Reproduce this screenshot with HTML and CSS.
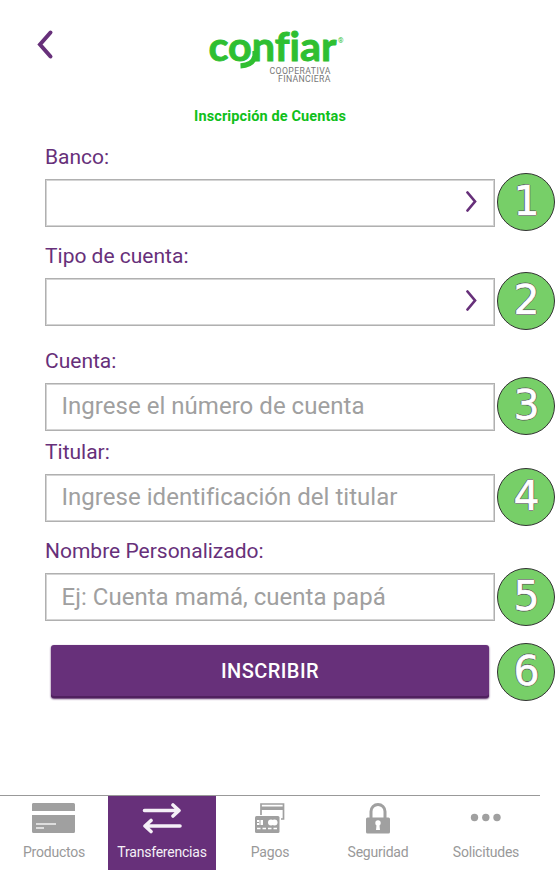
FILE: index.html
```html
<!DOCTYPE html>
<html lang="es">
<head>
<meta charset="utf-8">
<title>Inscripción de Cuentas</title>
<link rel="stylesheet" href="styles.css">
</head>
<body>
<main class="screen">
  <header class="header">
    <svg class="back" width="20" height="34" viewBox="0 0 20 34"><path d="M15.500 4.500 5 16.500 15.500 28.500" fill="none" stroke="#67307a" stroke-width="4" stroke-linecap="round"/></svg>
    <svg class="logo" width="142" height="62" viewBox="0 0 142 62">
      <text class="wordmark" x="3.500" y="36" textLength="128" lengthAdjust="spacingAndGlyphs">confiar</text>
      <path d="M50 26V31Q48 40.300 35.500 40.800" fill="none" stroke="#2fbf31" stroke-width="5.200"/>
      <text class="registered" x="133" y="18">®</text>
      <text class="tagline" x="64.500" y="49" textLength="61">COOPERATIVA</text>
      <text class="tagline" x="73" y="57" textLength="52.500">FINANCIERA</text>
    </svg>
  </header>
  <h1 class="title">Inscripción de Cuentas</h1>

  <form class="form">
    <label class="label">Banco:</label>
    <div class="row">
      <div class="field select"><svg width="12" height="22" viewBox="0 0 12 22"><path d="m1.500 1.500 7.500 9-7.500 9" fill="none" stroke="#67307a" stroke-width="2.700" stroke-linecap="round"/></svg></div>
      <span class="badge">1</span>
    </div>
    <label class="label">Tipo de cuenta:</label>
    <div class="row">
      <div class="field select"><svg width="12" height="22" viewBox="0 0 12 22"><path d="m1.500 1.500 7.500 9-7.500 9" fill="none" stroke="#67307a" stroke-width="2.700" stroke-linecap="round"/></svg></div>
      <span class="badge">2</span>
    </div>
    <label class="label account">Cuenta:</label>
    <div class="row">
      <div class="field">Ingrese el número de cuenta</div>
      <span class="badge">3</span>
    </div>
    <label class="label holder">Titular:</label>
    <div class="row">
      <div class="field">Ingrese identificación del titular</div>
      <span class="badge">4</span>
    </div>
    <label class="label alias">Nombre Personalizado:</label>
    <div class="row">
      <div class="field last">Ej: Cuenta mamá, cuenta papá</div>
      <span class="badge">5</span>
    </div>
    <div class="row submit-row">
      <button class="submit" type="button">INSCRIBIR</button>
      <span class="badge">6</span>
    </div>
  </form>

  <nav class="tabs">
    <a class="tab">
      <svg width="44" height="32" viewBox="0 0 44 32"><path d="M2 0H41.500a1.500 1.500 0 0 1 1.500 1.500V8H0V1.500A1.500 1.500 0 0 1 2 0ZM0 12H43V28.500a1.500 1.500 0 0 1-1.500 1.500H1.500A1.500 1.500 0 0 1 0 28.500Z" fill="#a0a0a0"/><path d="M4 21H24M4 25H12" stroke="#ddd" stroke-width="2"/></svg>
      <span>Productos</span>
    </a>
    <a class="tab active">
      <svg width="40" height="32" viewBox="0 0 40 32"><path d="M2.500 7.500H36M31 2 37 7.500 31 13M38 23H3M9 17.500 3 23 9 28.500" fill="none" stroke="#f5f0f7" stroke-width="3.600" stroke-linecap="round" stroke-linejoin="round"/></svg>
      <span>Transferencias</span>
    </a>
    <a class="tab">
      <svg width="30" height="32" viewBox="0 0 30 32"><path d="M6 12V1H28.500V16H26" fill="none" stroke="#a0a0a0" stroke-width="1.700"/><path d="M6 3.500H28V7H6Z" fill="#a0a0a0"/><rect y="13" width="24.500" height="17" rx="1.500" fill="#a0a0a0"/><path d="M2 17H8V22H2Z" fill="#fff"/><path d="M5 17V22M2 19.500H4" stroke="#a0a0a0"/><circle cx="16" cy="19.500" r="3" fill="#fff"/><circle cx="19.500" cy="19.500" r="3" fill="#fff"/><path d="M2 25.500H22" stroke="#fff" stroke-width="1.500" stroke-dasharray="3.500 2"/></svg>
      <span>Pagos</span>
    </a>
    <a class="tab">
      <svg width="26" height="32" viewBox="0 0 26 32"><path d="M6 16V8.500a7 7 0 0 1 14 0V16" fill="none" stroke="#a0a0a0" stroke-width="3"/><rect x="1" y="14.500" width="24" height="16" rx="1.500" fill="#a0a0a0"/><circle cx="13" cy="20" r="2.700" fill="#fff"/><path d="M11.800 20H14.200L15 27H11Z" fill="#fff"/></svg>
      <span>Seguridad</span>
    </a>
    <a class="tab">
      <svg width="32" height="32" viewBox="0 0 32 32" fill="#a0a0a0"><circle cx="4.500" cy="14.500" r="3.700"/><circle cx="15.800" cy="14.500" r="3.700"/><circle cx="27" cy="14.500" r="3.700"/></svg>
      <span>Solicitudes</span>
    </a>
  </nav>
</main>
</body>
</html>
```
FILE: styles.css
```css
* {
  box-sizing: border-box;
}

body {
  margin: 0;
  background: #fff;
  font-family: Roboto, "Liberation Sans", sans-serif;
}

.screen {
  display: flex;
  flex-direction: column;
  width: 555px;
  height: 870px;
  overflow: hidden;
}

.header {
  display: flex;
  gap: 150px;
  height: 103px;
  padding: 25px 0 0 35px;
}

.back {
  margin-top: 3px;
}

.logo {
  overflow: visible;
}

.wordmark {
  fill: #2fbf31;
  stroke: #2fbf31;
  stroke-width: 0.900px;
  font: 700 41px Lato, sans-serif;
  font-variant-ligatures: none;
}

.registered {
  fill: #2fbf31;
  font-size: 7px;
}

.tagline {
  fill: #777;
  font-size: 8.700px;
}

.title {
  margin: 0;
  width: 540px;
  height: 27px;
  color: #0fc01a;
  font-size: 14.500px;
  line-height: 27px;
  letter-spacing: 0.120px;
  font-weight: 700;
  text-align: center;
}

.form {
  display: flex;
  flex-direction: column;
  padding-left: 45px;
}

.label {
  height: 43px;
  padding-top: 12px;
  color: #67307a;
  font-size: 21px;
  line-height: 30px;
}

.row {
  display: flex;
  align-items: center;
  gap: 2px;
  height: 58px;
  margin-bottom: -2px;
}

.label.account {
  height: 49px;
  padding-top: 18px;
}

.label.holder {
  height: 35px;
  padding-top: 4px;
}

.label.alias {
  height: 44px;
  padding-top: 12px;
}

.field {
  display: flex;
  align-items: center;
  width: 450px;
  height: 48px;
  margin-top: 1px;
  padding: 0 0 1px 15.500px;
  border: 1px solid #b0b0b0;
  box-shadow: inset 0 0 0 1px #d4d4d4;
  color: #a0a0a0;
  font-size: 24px;
  letter-spacing: 0.030px;
}

.field.last {
  margin-top: 0;
  padding-bottom: 0;
}

.select {
  justify-content: flex-end;
  padding-right: 16px;
}

.badge {
  flex: none;
  width: 58px;
  height: 58px;
  border: 1px solid #333;
  border-radius: 50%;
  background: #77cf68;
  color: #fff;
  font: 41px/54px "DejaVu Sans", sans-serif;
  text-align: center;
  text-indent: 1px;
  -webkit-text-stroke: 0.600px #fff;
  text-shadow: 1px 0 #555, -1px 0 #555, 0 1px #555, 0 -1px #555;
}

.submit-row {
  margin-top: 19px;
  gap: 8px;
  padding-left: 6px;
}

.submit {
  width: 438px;
  height: 53px;
  margin-top: -2px;
  padding: 0;
  border: 0;
  border-radius: 3px;
  background: #67307a;
  box-shadow: inset 0 -2px #50205f, 0 1px 2px #50205f;
  color: #fff;
  font: 500 20px Roboto, sans-serif;
  letter-spacing: 0.450px;
}

.tabs {
  display: grid;
  grid-template-columns: repeat(5, 108px);
  width: 540px;
  height: 75px;
  margin-top: auto;
  border-top: 1px solid #999;
}

.tab {
  display: flex;
  flex-direction: column;
  align-items: center;
  gap: 7px;
  padding-top: 6.500px;
  color: #999;
  font-size: 14px;
  line-height: 20px;
  letter-spacing: -0.220px;
}

.tab svg {
  margin-left: -1px;
}

.active {
  background: #67307a;
  color: #f5f0f7;
}
```
